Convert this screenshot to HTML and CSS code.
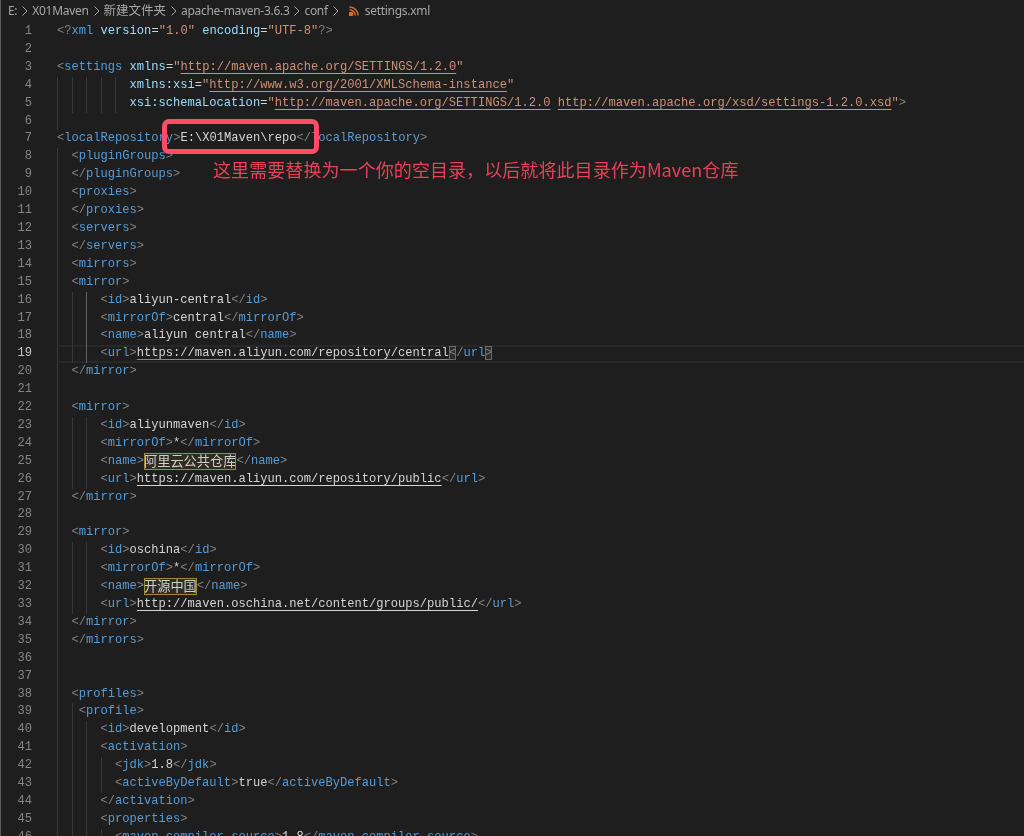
FILE: index.html
```html
<!DOCTYPE html>
<html lang="zh-CN">
<head>
<meta charset="utf-8">
<title>settings.xml</title>
<link rel="stylesheet" href="styles.css">
</head>
<body>
<main class="editor">
<nav class="crumbs">
<span class="crumb c1">E:</span><svg class="chev" viewBox="0 0 8 12"><path d="M1.5 1.5 6 6l-4.500 4.500"/></svg>
<span class="crumb">X01Maven</span><svg class="chev" viewBox="0 0 8 12"><path d="M1.5 1.500 6 6l-4.500 4.500"/></svg>
<span class="crumb han">新建文件夹</span><svg class="chev" viewBox="0 0 8 12"><path d="M1.5 1.500 6 6l-4.500 4.500"/></svg>
<span class="crumb">apache-maven-3.6.3</span><svg class="chev" viewBox="0 0 8 12"><path d="M1.5 1.500 6 6l-4.500 4.500"/></svg>
<span class="crumb">conf</span><svg class="chev" viewBox="0 0 8 12"><path d="M1.5 1.500 6 6l-4.500 4.500"/></svg>
<svg class="rss" viewBox="0 0 10 10"><circle cx="2" cy="8" r="1.600"/><path d="M.5 3.800A5.700 5.700 0 0 1 6.200 9.500M.5 .9A8.600 8.600 0 0 1 9.100 9.500"/></svg>
<span class="crumb">settings.xml</span>
</nav>
<section class="code">
<div class="line"><span class="num">1</span><code class="src"><b>&lt;?</b><em>xml</em> <u>version</u>=<s>"1.0"</s> <u>encoding</u>=<s>"UTF-8"</s><b>?&gt;</b></code></div>
<div class="line"><span class="num">2</span><code class="src"></code></div>
<div class="line"><span class="num">3</span><code class="src"><b>&lt;</b><em>settings</em> <u>xmlns</u>=<s>"<span class="link">http://maven.apache.org/SETTINGS/1.2.0</span>"</s></code></div>
<div class="line"><span class="num">4</span><code class="src"><i class="g"></i><i class="g"></i><i class="g"></i><i class="g"></i><i class="g"></i><u>xmlns:xsi</u>=<s>"<span class="link">http://www.w3.org/2001/XMLSchema-instance</span>"</s></code></div>
<div class="line"><span class="num">5</span><code class="src"><i class="g"></i><i class="g"></i><i class="g"></i><i class="g"></i><i class="g"></i><u>xsi:schemaLocation</u>=<s>"<span class="link">http://maven.apache.org/SETTINGS/1.2.0</span> <span class="link">http://maven.apache.org/xsd/settings-1.2.0.xsd</span>"</s><b>&gt;</b></code></div>
<div class="line"><span class="num">6</span><code class="src"><i class="g"></i></code></div>
<div class="line"><span class="num">7</span><code class="src"><b>&lt;</b><em>localRepository</em><b>&gt;</b>E:\X01Maven\repo<b>&lt;/</b><em>localRepository</em><b>&gt;</b></code></div>
<div class="line"><span class="num">8</span><code class="src"><i class="g"></i><b>&lt;</b><em>pluginGroups</em><b>&gt;</b></code></div>
<div class="line"><span class="num">9</span><code class="src"><i class="g"></i><b>&lt;/</b><em>pluginGroups</em><b>&gt;</b></code></div>
<div class="line"><span class="num">10</span><code class="src"><i class="g"></i><b>&lt;</b><em>proxies</em><b>&gt;</b></code></div>
<div class="line"><span class="num">11</span><code class="src"><i class="g"></i><b>&lt;/</b><em>proxies</em><b>&gt;</b></code></div>
<div class="line"><span class="num">12</span><code class="src"><i class="g"></i><b>&lt;</b><em>servers</em><b>&gt;</b></code></div>
<div class="line"><span class="num">13</span><code class="src"><i class="g"></i><b>&lt;/</b><em>servers</em><b>&gt;</b></code></div>
<div class="line"><span class="num">14</span><code class="src"><i class="g"></i><b>&lt;</b><em>mirrors</em><b>&gt;</b></code></div>
<div class="line"><span class="num">15</span><code class="src"><i class="g"></i><b>&lt;</b><em>mirror</em><b>&gt;</b></code></div>
<div class="line"><span class="num">16</span><code class="src"><i class="g"></i><i class="g"></i><i class="g on"></i><b>&lt;</b><em>id</em><b>&gt;</b>aliyun-central<b>&lt;/</b><em>id</em><b>&gt;</b></code></div>
<div class="line"><span class="num">17</span><code class="src"><i class="g"></i><i class="g"></i><i class="g on"></i><b>&lt;</b><em>mirrorOf</em><b>&gt;</b>central<b>&lt;/</b><em>mirrorOf</em><b>&gt;</b></code></div>
<div class="line"><span class="num">18</span><code class="src"><i class="g"></i><i class="g"></i><i class="g on"></i><b>&lt;</b><em>name</em><b>&gt;</b>aliyun central<b>&lt;/</b><em>name</em><b>&gt;</b></code></div>
<div class="line"><span class="num cur">19</span><code class="src active"><i class="g"></i><i class="g"></i><i class="g on"></i><b>&lt;</b><em>url</em><b>&gt;</b><span class="link dim">https://maven.aliyun.com/repository/central</span><b class="match">&lt;</b><b>/</b><em>url</em><b class="match">&gt;</b></code></div>
<div class="line"><span class="num">20</span><code class="src"><i class="g"></i><b>&lt;/</b><em>mirror</em><b>&gt;</b></code></div>
<div class="line"><span class="num">21</span><code class="src"><i class="g"></i></code></div>
<div class="line"><span class="num">22</span><code class="src"><i class="g"></i><b>&lt;</b><em>mirror</em><b>&gt;</b></code></div>
<div class="line"><span class="num">23</span><code class="src"><i class="g"></i><i class="g"></i><i class="g"></i><b>&lt;</b><em>id</em><b>&gt;</b>aliyunmaven<b>&lt;/</b><em>id</em><b>&gt;</b></code></div>
<div class="line"><span class="num">24</span><code class="src"><i class="g"></i><i class="g"></i><i class="g"></i><b>&lt;</b><em>mirrorOf</em><b>&gt;</b>*<b>&lt;/</b><em>mirrorOf</em><b>&gt;</b></code></div>
<div class="line"><span class="num">25</span><code class="src"><i class="g"></i><i class="g"></i><i class="g"></i><b>&lt;</b><em>name</em><b>&gt;</b><span class="cjk">阿里云公共仓库</span><b>&lt;/</b><em>name</em><b>&gt;</b></code></div>
<div class="line"><span class="num">26</span><code class="src"><i class="g"></i><i class="g"></i><i class="g"></i><b>&lt;</b><em>url</em><b>&gt;</b><span class="link">https://maven.aliyun.com/repository/public</span><b>&lt;/</b><em>url</em><b>&gt;</b></code></div>
<div class="line"><span class="num">27</span><code class="src"><i class="g"></i><b>&lt;/</b><em>mirror</em><b>&gt;</b></code></div>
<div class="line"><span class="num">28</span><code class="src"><i class="g"></i></code></div>
<div class="line"><span class="num">29</span><code class="src"><i class="g"></i><b>&lt;</b><em>mirror</em><b>&gt;</b></code></div>
<div class="line"><span class="num">30</span><code class="src"><i class="g"></i><i class="g"></i><i class="g"></i><b>&lt;</b><em>id</em><b>&gt;</b>oschina<b>&lt;/</b><em>id</em><b>&gt;</b></code></div>
<div class="line"><span class="num">31</span><code class="src"><i class="g"></i><i class="g"></i><i class="g"></i><b>&lt;</b><em>mirrorOf</em><b>&gt;</b>*<b>&lt;/</b><em>mirrorOf</em><b>&gt;</b></code></div>
<div class="line"><span class="num">32</span><code class="src"><i class="g"></i><i class="g"></i><i class="g"></i><b>&lt;</b><em>name</em><b>&gt;</b><span class="cjk">开源中国</span><b>&lt;/</b><em>name</em><b>&gt;</b></code></div>
<div class="line"><span class="num">33</span><code class="src"><i class="g"></i><i class="g"></i><i class="g"></i><b>&lt;</b><em>url</em><b>&gt;</b><span class="link">http://maven.oschina.net/content/groups/public/</span><b>&lt;/</b><em>url</em><b>&gt;</b></code></div>
<div class="line"><span class="num">34</span><code class="src"><i class="g"></i><b>&lt;/</b><em>mirror</em><b>&gt;</b></code></div>
<div class="line"><span class="num">35</span><code class="src"><i class="g"></i><b>&lt;/</b><em>mirrors</em><b>&gt;</b></code></div>
<div class="line"><span class="num">36</span><code class="src"><i class="g"></i></code></div>
<div class="line"><span class="num">37</span><code class="src"><i class="g"></i></code></div>
<div class="line"><span class="num">38</span><code class="src"><i class="g"></i><b>&lt;</b><em>profiles</em><b>&gt;</b></code></div>
<div class="line"><span class="num">39</span><code class="src"><i class="g"></i><i class="g one"></i><b>&lt;</b><em>profile</em><b>&gt;</b></code></div>
<div class="line"><span class="num">40</span><code class="src"><i class="g"></i><i class="g"></i><i class="g"></i><b>&lt;</b><em>id</em><b>&gt;</b>development<b>&lt;/</b><em>id</em><b>&gt;</b></code></div>
<div class="line"><span class="num">41</span><code class="src"><i class="g"></i><i class="g"></i><i class="g"></i><b>&lt;</b><em>activation</em><b>&gt;</b></code></div>
<div class="line"><span class="num">42</span><code class="src"><i class="g"></i><i class="g"></i><i class="g"></i><i class="g"></i><b>&lt;</b><em>jdk</em><b>&gt;</b>1.8<b>&lt;/</b><em>jdk</em><b>&gt;</b></code></div>
<div class="line"><span class="num">43</span><code class="src"><i class="g"></i><i class="g"></i><i class="g"></i><i class="g"></i><b>&lt;</b><em>activeByDefault</em><b>&gt;</b>true<b>&lt;/</b><em>activeByDefault</em><b>&gt;</b></code></div>
<div class="line"><span class="num">44</span><code class="src"><i class="g"></i><i class="g"></i><i class="g"></i><b>&lt;/</b><em>activation</em><b>&gt;</b></code></div>
<div class="line"><span class="num">45</span><code class="src"><i class="g"></i><i class="g"></i><i class="g"></i><b>&lt;</b><em>properties</em><b>&gt;</b></code></div>
<div class="line"><span class="num">46</span><code class="src"><i class="g"></i><i class="g"></i><i class="g"></i><i class="g"></i><b>&lt;</b><em>maven.compiler.source</em><b>&gt;</b>1.8<b>&lt;/</b><em>maven.compiler.source</em><b>&gt;</b></code></div>
</section>
<div class="callout-box"></div>
<p class="callout-text">这里需要替换为一个你的空目录，以后就将此目录作为Maven仓库</p>
</main>
</body>
</html>
```
FILE: styles.css
```css
* { box-sizing: border-box; }
html, body { margin: 0; height: 100%; }
body { background: #1e1e1e; overflow: hidden; }
.editor {
  position: relative;
  width: 1024px;
  height: 836px;
  overflow: hidden;
  background: #1e1e1e;
  border-left: 1px solid #5a5a5a;
  filter: blur(0.35px);
}
.crumbs {
  display: flex;
  align-items: center;
  height: 23px;
  padding: 0 0 2px 7px;
  font: 12px/20px "Noto Sans", "Noto Sans CJK SC", sans-serif;
  letter-spacing: -0.3px;
  color: #a6a6a6;
}
.crumb.han { font-size: 12.5px; letter-spacing: 0; }
.chev { width: 8px; height: 12px; margin: 0 3px 0 4px; fill: none; stroke: #a6a6a6; stroke-width: 1; }
.rss { width: 10px; height: 10px; margin: 0 6px 0 6px; fill: #d9702c; stroke: #d9702c; stroke-width: 1.500; }
.rss path { fill: none; }
.code { display: block; }
.line { display: flex; height: 17.91px; font: 12.1px/17.91px "Liberation Mono", "Noto Sans CJK SC", monospace; }
.num { flex: none; width: 31px; margin-right: 25px; text-align: right; color: #858585; }
.num.cur { color: #c6c6c6; }
.src { flex: 1; display: block; height: 17.91px; font: inherit; white-space: pre; color: #d4d4d4; }
.src.active { box-shadow: inset 0 2px 0 #282828, inset 0 -2px 0 #282828; }
.g { display: inline-block; width: 2ch; height: 17.91px; vertical-align: top; border-left: 1px solid #383838; }
.g.one { width: 1ch; }
.g.on { border-left-color: #626262; }
.src b { font-weight: 400; color: #808080; }
.src em { font-style: normal; color: #569cd6; }
.src u { text-decoration: none; color: #9cdcfe; }
.src s { text-decoration: none; color: #ce9178; }
.link { text-decoration: underline; text-underline-offset: 3px; text-decoration-thickness: 1px; }
.link.dim { text-decoration-color: #8a8a8a; }
.src b.match { outline: 1px solid #6b6b6b; outline-offset: -1px; background: #2a2d2a; }
.cjk { display: inline-block; height: 17px; font: 13.2px/16px "Noto Sans CJK SC", sans-serif; color: #cfcfcf; outline: 1px solid #a5892f; outline-offset: -1px; vertical-align: top; background: #2f2c22; }
.callout-box {
  position: absolute;
  left: 161px;
  top: 119px;
  width: 157px;
  height: 35px;
  border: 5px solid #fb4d63;
  border-radius: 7px;
}
.callout-text {
  position: absolute;
  left: 212px;
  top: 156px;
  margin: 0;
  font: 18px/26px "Noto Sans CJK SC", sans-serif;
  letter-spacing: 0.08px;
  color: #ea4058;
  white-space: nowrap;
}
```
